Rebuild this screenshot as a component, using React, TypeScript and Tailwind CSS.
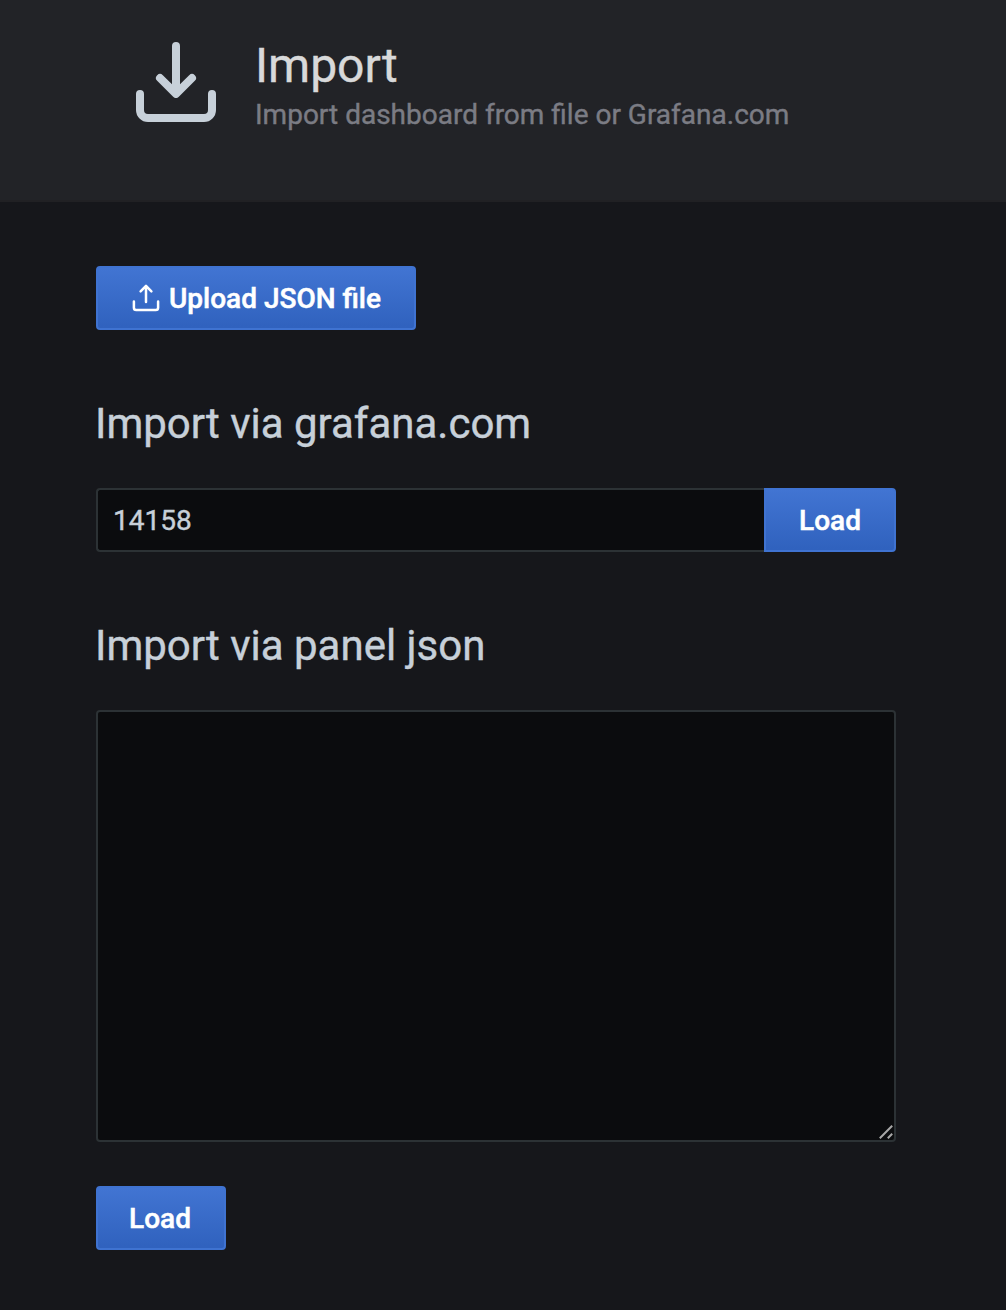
import React from "react";

const tray =
  "M21,14a1,1,0,0,0-1,1v4a1,1,0,0,1-1,1H5a1,1,0,0,1-1-1V15a1,1,0,0,0-2,0v4a3,3,0,0,0,3,3H19a3,3,0,0,0,3-3V15A1,1,0,0,0,21,14Z";

function ImportIcon() {
  return (
    <svg viewBox="0 0 24 24" className="size-24 shrink-0 fill-[#c7d0d9]">
      <path d={tray} />
      <path d="M11.29,15.71a1,1,0,0,0,.33.21.94.94,0,0,0,.76,0,1,1,0,0,0,.33-.21l4-4a1,1,0,0,0-1.42-1.42L13,12.59V3a1,1,0,0,0-2,0v9.59l-2.29-2.3a1,1,0,1,0-1.42,1.42Z" />
    </svg>
  );
}

function UploadIcon() {
  return (
    <svg
      viewBox="0 0 32 32"
      className="size-8 shrink-0 fill-none stroke-white stroke-[2.5] [stroke-linecap:round] [stroke-linejoin:round]"
    >
      <path d="M3.9 19.5v6.3a2.3 2.3 0 0 0 2.3 2.3h19.6a2.3 2.3 0 0 0 2.3-2.3v-6.3" />
      <path d="M16 20V4.2M10.6 9.3L16 3.9l5.4 5.4" />
    </svg>
  );
}

const button =
  "flex h-16 items-center justify-center border-2 border-[#3f73d1] bg-linear-to-b from-[#4275d3] to-[#2f61bd] bg-origin-border pt-[2px] text-[28px] font-medium text-white [-webkit-text-stroke:0.5px]";

const heading = "-ml-px text-[42px] leading-[52px] font-normal text-[#c7d0d9]";

export default function App() {
  return (
    <div className="min-h-[1310px] bg-[#16171b] font-['Roboto',sans-serif] [-webkit-text-stroke:0.4px]">
      <header className="flex h-[202px] border-b-2 border-[#212124] bg-[#222327] pt-[34px] pl-32">
        <ImportIcon />
        <div className="ml-[31px]">
          <h1 className="mt-1 text-[48px] leading-[56px] font-normal text-[#d8d9da]">Import</h1>
          <div className="mt-[3px] text-[28px] leading-9 text-[#7b7c84]">
            Import dashboard from file or Grafana.com
          </div>
        </div>
      </header>
      <main className="w-[896px] pt-16 pl-24">
        <button className={`${button} w-80 gap-[7px] rounded-[4px] pr-px`}>
          <span className="-mt-[2px]">
            <UploadIcon />
          </span>
          <span>Upload JSON file</span>
        </button>
        <h2 className={`${heading} mt-[68px]`}>Import via grafana.com</h2>
        <div className="mt-[38px] flex">
          <input
            defaultValue="14158"
            className="h-16 min-w-0 flex-1 rounded-l-[4px] border-2 border-r-0 border-[#2c3235] bg-[#0b0c0e] px-[15px] text-[28px] text-[#c7d0d9] outline-none"
          />
          <button className={`${button} w-[132px] rounded-r-[4px]`}>Load</button>
        </div>
        <h2 className={`${heading} mt-[68px]`}>Import via panel json</h2>
        <div className="relative mt-[38px] h-[432px]">
          <textarea className="block h-full w-full resize-none rounded-[4px] border-2 border-[#2c3235] bg-[#0b0c0e] p-4 text-[28px] text-[#c7d0d9] outline-none" />
          <svg
            viewBox="0 0 14 14"
            className="pointer-events-none absolute right-[3px] bottom-[3px] size-[14px] fill-none stroke-[#a8a8a8] stroke-2"
          >
            <path d="M0.8 13.2 L13.2 0.8 M8.8 13.2 L13.2 8.8" />
          </svg>
        </div>
        <button className={`${button} mt-11 w-[130px] rounded-[4px] pr-[2px]`}>Load</button>
      </main>
    </div>
  );
}
